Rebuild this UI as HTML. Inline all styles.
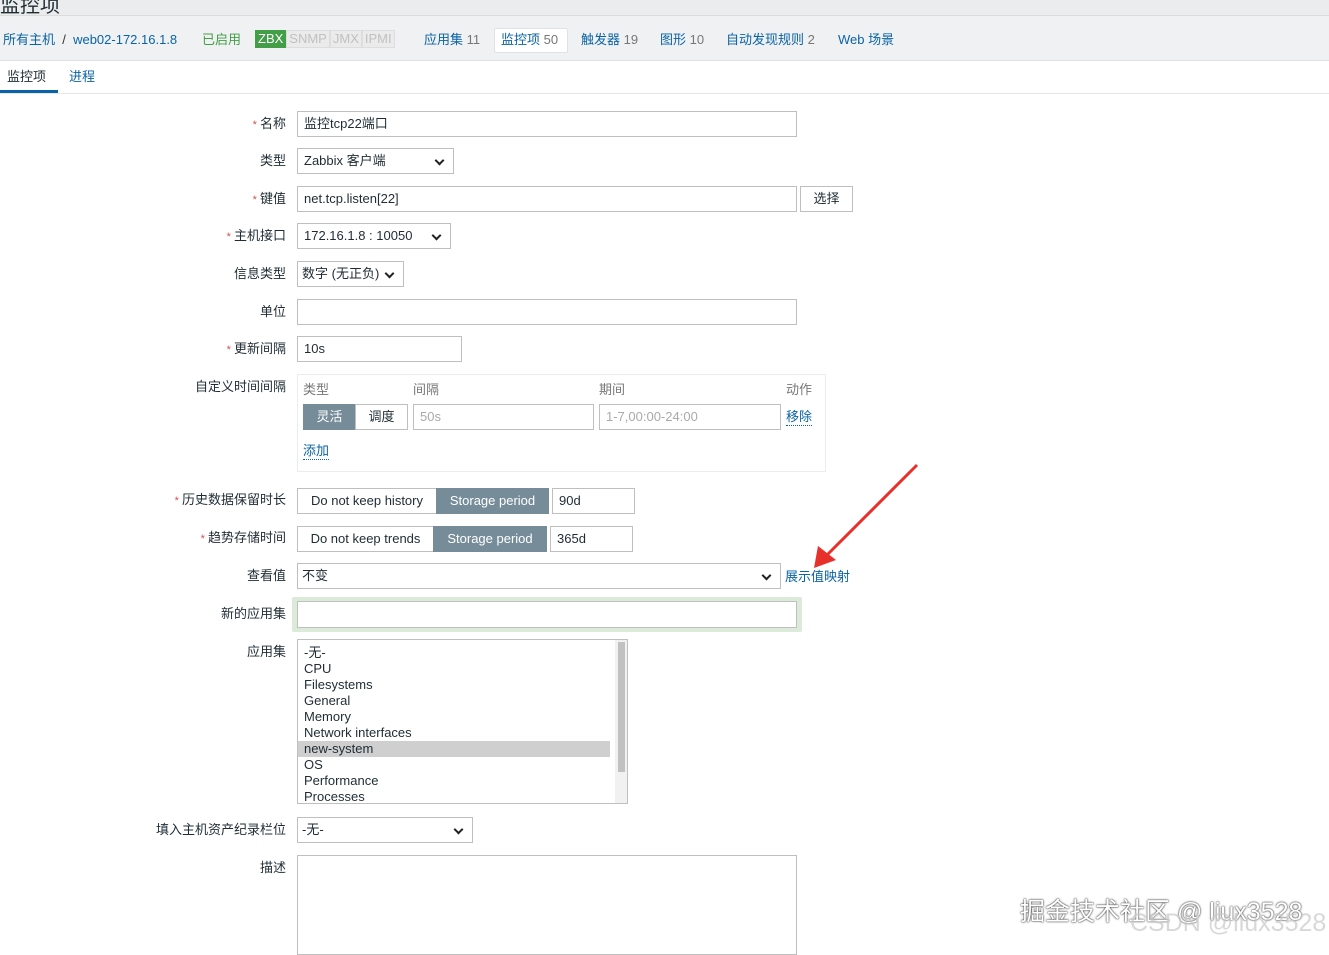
<!DOCTYPE html>
<html><head><meta charset="utf-8"><style>
body{margin:0;width:1329px;height:948px;overflow:hidden;background:#fff;font-family:"Liberation Sans","Noto Sans CJK SC",sans-serif;font-size:13px;color:#1f2c33;position:relative}
.a{position:absolute;white-space:nowrap}
.lbl{position:absolute;right:1043px;text-align:right;white-space:nowrap;color:#1f2c33;margin-top:-3px}
.req::before{content:"* ";color:#d64e4e;font-size:11px}
.in{position:absolute;border:1px solid #bfbfbf;background:#fff;box-sizing:border-box;height:26px;line-height:24px;padding-left:6px}
.sel::after{content:"";position:absolute;right:10px;top:8px;width:5px;height:5px;border-right:2px solid #222;border-bottom:2px solid #222;transform:rotate(45deg)}
.lnk{color:#0a63a6}
.seg{position:absolute;height:26px;box-sizing:border-box;border:1px solid #bfbfbf;line-height:24px;text-align:center}
.on{background:#768d99;color:#fff;border-color:#768d99}
</style></head><body>
<div class="a" style="left:0;top:0;width:1329px;height:15px;background:#ebeced;border-bottom:1px solid #dcdcdc"></div>
<div class="a" style="left:0;top:-11px;font-size:20px">监控项</div>
<div class="a" style="left:0;top:16px;width:1329px;height:44px;background:#f0f1f2;border-bottom:1px solid #e0e0e0"></div>
<div class="a lnk" style="left:3px;top:29px">所有主机 <span style="color:#333">&nbsp;/&nbsp;</span> web02-172.16.1.8</div>
<div class="a" style="left:202px;top:29px;color:#429e47">已启用</div>
<div class="a" style="left:255px;top:30px;height:18px;line-height:18px;font-size:13px"><span style="background:#429e47;color:#fff;padding:0 3px;display:inline-block">ZBX</span><span style="color:#c0c0c0;background:#ebebeb;border:1px solid #ddd;padding:0 2px;display:inline-block;line-height:16px">SNMP</span><span style="color:#c0c0c0;background:#ebebeb;border:1px solid #ddd;padding:0 2px;display:inline-block;line-height:16px">JMX</span><span style="color:#c0c0c0;background:#ebebeb;border:1px solid #ddd;padding:0 2px;display:inline-block;line-height:16px">IPMI</span></div>
<div class="a lnk" style="left:424px;top:29px">应用集 <span style="color:#777">11</span></div>
<div class="a" style="left:494px;top:28px;width:72px;height:23px;background:#fff;border:1px solid #e2e2e2;border-radius:2px"></div>
<div class="a lnk" style="left:501px;top:29px">监控项 <span style="color:#777">50</span></div>
<div class="a lnk" style="left:581px;top:29px">触发器 <span style="color:#777">19</span></div>
<div class="a lnk" style="left:660px;top:29px">图形 <span style="color:#777">10</span></div>
<div class="a lnk" style="left:726px;top:29px">自动发现规则 <span style="color:#777">2</span></div>
<div class="a lnk" style="left:838px;top:29px">Web 场景</div>
<div class="a" style="left:0;top:93px;width:1329px;height:1px;background:#e6e6e6"></div>
<div class="a" style="left:7px;top:66px">监控项</div>
<div class="a" style="left:0;top:90px;width:58px;height:3px;background:#0a63a6"></div>
<div class="a lnk" style="left:69px;top:66px">进程</div>

<div class="lbl req" style="top:116px">名称</div><div class="in" style="left:297px;top:111px;width:500px">监控tcp22端口</div>
<div class="lbl" style="top:153px">类型</div><div class="in sel" style="left:297px;top:148px;width:157px">Zabbix 客户端</div>
<div class="lbl req" style="top:191px">键值</div><div class="in" style="left:297px;top:186px;width:500px">net.tcp.listen[22]</div>
<div class="in" style="left:800px;top:186px;width:53px;background:#fff;text-align:center;padding:0">选择</div>
<div class="lbl req" style="top:228px">主机接口</div><div class="in sel" style="left:297px;top:223px;width:154px">172.16.1.8 : 10050</div>
<div class="lbl" style="top:266px">信息类型</div><div class="in sel" style="left:297px;top:261px;width:107px;padding-left:4px">数字 (无正负)</div>
<div class="lbl" style="top:304px">单位</div><div class="in" style="left:297px;top:299px;width:500px"></div>
<div class="lbl req" style="top:341px">更新间隔</div><div class="in" style="left:297px;top:336px;width:165px">10s</div>
<div class="lbl" style="top:379px">自定义时间间隔</div>
<div class="a" style="left:297px;top:374px;width:527px;height:96px;border:1px solid #ececec"></div>
<div class="a" style="left:303px;top:379px;color:#777">类型</div>
<div class="a" style="left:413px;top:379px;color:#777">间隔</div>
<div class="a" style="left:599px;top:379px;color:#777">期间</div>
<div class="a" style="left:786px;top:379px;color:#777">动作</div>
<div class="seg on" style="left:303px;top:404px;width:53px">灵活</div>
<div class="seg" style="left:355px;top:404px;width:53px">调度</div>
<div class="in" style="left:413px;top:404px;width:181px;color:#aaa">50s</div>
<div class="in" style="left:599px;top:404px;width:182px;color:#aaa">1-7,00:00-24:00</div>
<div class="a lnk" style="left:786px;top:406px;border-bottom:1px dotted #0a63a6">移除</div>
<div class="a lnk" style="left:303px;top:440px;border-bottom:1px dotted #0a63a6">添加</div>

<div class="lbl req" style="top:492px">历史数据保留时长</div>
<div class="seg" style="left:297px;top:488px;width:140px">Do not keep history</div>
<div class="seg on" style="left:436px;top:488px;width:113px">Storage period</div>
<div class="in" style="left:552px;top:488px;width:83px">90d</div>
<div class="lbl req" style="top:530px">趋势存储时间</div>
<div class="seg" style="left:297px;top:526px;width:137px">Do not keep trends</div>
<div class="seg on" style="left:433px;top:526px;width:114px">Storage period</div>
<div class="in" style="left:550px;top:526px;width:83px">365d</div>
<div class="lbl" style="top:568px">查看值</div><div class="in sel" style="left:297px;top:563px;width:484px;padding-left:4px">不变</div>
<div class="a lnk" style="left:785px;top:566px">展示值映射</div>
<div class="lbl" style="top:606px">新的应用集</div>
<div class="a" style="left:292px;top:597px;width:510px;height:35px;background:#dcebd9;border-radius:2px"></div>
<div class="in" style="left:297px;top:601px;width:500px;height:27px"></div>
<div class="lbl" style="top:644px">应用集</div>
<div class="a" style="left:297px;top:639px;width:331px;height:165px;border:1px solid #bfbfbf;box-sizing:border-box;overflow:hidden;line-height:16px;padding-top:5px">
<div style="padding-left:6px">-无-</div><div style="padding-left:6px">CPU</div><div style="padding-left:6px">Filesystems</div><div style="padding-left:6px">General</div><div style="padding-left:6px">Memory</div><div style="padding-left:6px">Network interfaces</div><div style="padding-left:6px;background:#cfcfcf;width:306px">new-system</div><div style="padding-left:6px">OS</div><div style="padding-left:6px">Performance</div><div style="padding-left:6px">Processes</div>
<div style="position:absolute;right:0;top:0;width:12px;height:163px;background:#f1f1f1"></div>
<div style="position:absolute;right:2px;top:2px;width:7px;height:130px;background:#c1c1c1"></div>
</div>
<div class="lbl" style="top:822px">填入主机资产纪录栏位</div><div class="in sel" style="left:297px;top:817px;width:176px;padding-left:4px">-无-</div>
<div class="lbl" style="top:860px">描述</div><div class="in" style="left:297px;top:855px;width:500px;height:100px"></div>
<svg class="a" style="left:810px;top:462px" width="112" height="110"><line x1="107" y1="3" x2="14" y2="96" stroke="#e8302a" stroke-width="3"/><polygon points="4,106 8,84 26,98" fill="#e8302a"/></svg>
<div class="a" style="left:1020px;top:892px;font-size:25px;color:#fff;text-shadow:0 0 2px #333,0 0 1px #333">掘金技术社区 @ liux3528</div>
<div class="a" style="left:1130px;top:909px;font-size:25px;color:rgba(200,200,200,.7)">CSDN @liux3528</div>
</body></html>
